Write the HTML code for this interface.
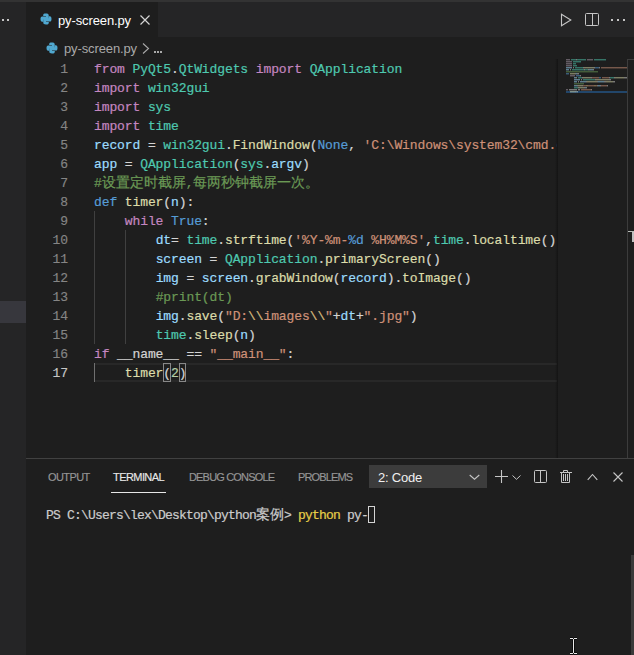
<!DOCTYPE html>
<html><head><meta charset="utf-8"><style>
*{margin:0;padding:0;box-sizing:border-box}
html,body{width:634px;height:655px;overflow:hidden;background:#1e1e1e}
body{position:relative;font-family:"Liberation Sans",sans-serif}
.a{position:absolute}
.ln{position:absolute;left:94px;height:19px;line-height:19px;white-space:pre;font-family:"Liberation Mono",monospace;font-size:13px;letter-spacing:-0.1px;color:#d4d4d4;-webkit-text-stroke:0.2px}
.num{position:absolute;left:26px;width:42px;text-align:right;height:19px;line-height:19px;font-family:"Liberation Mono",monospace;font-size:13px;letter-spacing:-0.1px;color:#858585;-webkit-text-stroke:0.15px}
.num.cur{color:#c6c6c6}
.ptab{position:absolute;top:460px;height:35px;line-height:35px;font-size:11px;color:#969696;white-space:nowrap;-webkit-text-stroke:0.15px}
svg{display:block}
.cjk{font-size:14px;letter-spacing:0}
</style></head><body>
<div class="a" style="left:0;top:0;width:634px;height:2px;background:#333"></div>
<div class="a" style="left:0;top:2px;width:26px;height:653px;background:#252526"></div>
<div class="a" style="left:0;top:301px;width:26px;height:22px;background:#37373d"></div>
<div class="a" style="left:2px;top:19px;width:2px;height:2px;background:#c5c5c5"></div>
<div class="a" style="left:7px;top:19px;width:2px;height:2px;background:#c5c5c5"></div>
<!-- tab bar -->
<div class="a" style="left:26px;top:2px;width:608px;height:35px;background:#252526"></div>
<div class="a" style="left:26px;top:2px;width:132px;height:35px;background:#1e1e1e"></div>
<svg class="a" style="left:40px;top:13px" width="12" height="12" viewBox="0 0 12 12"><g fill="#50a8d0"><path d="M3.2 2.2C3.2 .8 4.2 .5 6 .5C7.8 .5 8.7 1 8.7 2.2V5.2C8.7 5.8 8.2 6.3 7.6 6.3H4.6C3.9 6.3 3.4 6.8 3.4 7.5V8.7H2.2C1 8.7 .5 7.6 .5 6C.5 4.4 1 3.4 2.2 3.4H6V3H3.2Z"/><path d="M3.2 2.2C3.2 .8 4.2 .5 6 .5C7.8 .5 8.7 1 8.7 2.2V5.2C8.7 5.8 8.2 6.3 7.6 6.3H4.6C3.9 6.3 3.4 6.8 3.4 7.5V8.7H2.2C1 8.7 .5 7.6 .5 6C.5 4.4 1 3.4 2.2 3.4H6V3H3.2Z" transform="rotate(180 6 6)"/></g></svg>
<div class="a" style="left:58px;top:3px;height:35px;line-height:35px;font-size:13px;letter-spacing:-0.12px;color:#ffffff;white-space:nowrap">py-screen.py</div>
<svg class="a" style="left:140px;top:15px" width="10" height="10" viewBox="0 0 10 10"><path d="M.5 .5L9.5 9.5M9.5 .5L.5 9.5" stroke="#d4d4d4" stroke-width="1.2"/></svg>
<!-- editor actions -->
<svg class="a" style="left:560px;top:13px" width="12" height="14" viewBox="0 0 12 14"><path d="M1.5 1.3V12.7L10.8 7z" fill="none" stroke="#c5c5c5" stroke-width="1.1" stroke-linejoin="miter"/></svg>
<svg class="a" style="left:585px;top:13px" width="14" height="13" viewBox="0 0 14 13"><rect x=".5" y=".5" width="13" height="12" rx="1" fill="none" stroke="#c5c5c5"/><path d="M7.5 .5V12.5" stroke="#c5c5c5"/></svg>
<div class="a" style="left:611px;top:19px;width:2px;height:2px;background:#c5c5c5"></div>
<div class="a" style="left:617px;top:19px;width:2px;height:2px;background:#c5c5c5"></div>
<div class="a" style="left:623px;top:19px;width:2px;height:2px;background:#c5c5c5"></div>
<!-- breadcrumbs -->
<svg class="a" style="left:46px;top:42px" width="12" height="12" viewBox="0 0 12 12"><g fill="#50a8d0"><path d="M3.2 2.2C3.2 .8 4.2 .5 6 .5C7.8 .5 8.7 1 8.7 2.2V5.2C8.7 5.8 8.2 6.3 7.6 6.3H4.6C3.9 6.3 3.4 6.8 3.4 7.5V8.7H2.2C1 8.7 .5 7.6 .5 6C.5 4.4 1 3.4 2.2 3.4H6V3H3.2Z"/><path d="M3.2 2.2C3.2 .8 4.2 .5 6 .5C7.8 .5 8.7 1 8.7 2.2V5.2C8.7 5.8 8.2 6.3 7.6 6.3H4.6C3.9 6.3 3.4 6.8 3.4 7.5V8.7H2.2C1 8.7 .5 7.6 .5 6C.5 4.4 1 3.4 2.2 3.4H6V3H3.2Z" transform="rotate(180 6 6)"/></g></svg>
<div class="a" style="left:64px;top:38px;height:22px;line-height:22px;font-size:13px;letter-spacing:-0.12px;color:#a9a9a9;white-space:nowrap">py-screen.py</div>
<svg class="a" style="left:142px;top:43px" width="8" height="11" viewBox="0 0 8 11"><path d="M1 .5L6.5 5.5L1 10.5" fill="none" stroke="#a9a9a9" stroke-width="1.1"/></svg>
<div class="a" style="left:154px;top:51px;width:2px;height:2px;background:#a9a9a9"></div>
<div class="a" style="left:157px;top:51px;width:2px;height:2px;background:#a9a9a9"></div>
<div class="a" style="left:160px;top:51px;width:2px;height:2px;background:#a9a9a9"></div>
<!-- editor -->
<div class="a" style="left:94px;top:363px;width:463px;height:19px;border-top:2px solid #282828;border-bottom:2px solid #282828"></div>
<div class="a" style="left:94px;top:211px;width:1px;height:133px;background:#404040"></div><div class="a" style="left:125px;top:230px;width:1px;height:114px;background:#404040"></div><div class="a" style="left:94px;top:363px;width:1px;height:19px;background:#707070"></div>
<div class="a" style="left:163px;top:363px;width:8px;height:19px;border:1px solid #888"></div>
<div class="a" style="left:179px;top:363px;width:7px;height:19px;border:1px solid #888"></div>
<div class="num" style="top:60px">1</div><div class="num" style="top:79px">2</div><div class="num" style="top:98px">3</div><div class="num" style="top:117px">4</div><div class="num" style="top:136px">5</div><div class="num" style="top:155px">6</div><div class="num" style="top:174px">7</div><div class="num" style="top:193px">8</div><div class="num" style="top:212px">9</div><div class="num" style="top:231px">10</div><div class="num" style="top:250px">11</div><div class="num" style="top:269px">12</div><div class="num" style="top:288px">13</div><div class="num" style="top:307px">14</div><div class="num" style="top:326px">15</div><div class="num" style="top:345px">16</div><div class="num cur" style="top:364px">17</div>
<div class="a" style="left:0;top:0;width:557px;height:458px;overflow:hidden"><div class="ln" style="top:60px"><span style="color:#c586c0">from</span><span style="color:#d4d4d4"> </span><span style="color:#4ec9b0">PyQt5</span><span style="color:#d4d4d4">.</span><span style="color:#4ec9b0">QtWidgets</span><span style="color:#d4d4d4"> </span><span style="color:#c586c0">import</span><span style="color:#d4d4d4"> </span><span style="color:#4ec9b0">QApplication</span></div><div class="ln" style="top:79px"><span style="color:#c586c0">import</span><span style="color:#d4d4d4"> </span><span style="color:#4ec9b0">win32gui</span></div><div class="ln" style="top:98px"><span style="color:#c586c0">import</span><span style="color:#d4d4d4"> </span><span style="color:#4ec9b0">sys</span></div><div class="ln" style="top:117px"><span style="color:#c586c0">import</span><span style="color:#d4d4d4"> </span><span style="color:#4ec9b0">time</span></div><div class="ln" style="top:136px"><span style="color:#9cdcfe">record</span><span style="color:#d4d4d4"> = </span><span style="color:#4ec9b0">win32gui</span><span style="color:#d4d4d4">.</span><span style="color:#dcdcaa">FindWindow</span><span style="color:#d4d4d4">(</span><span style="color:#569cd6">None</span><span style="color:#d4d4d4">, </span><span style="color:#ce9178">'C:\Windows\system32\cmd.exe'</span><span style="color:#d4d4d4">)</span></div><div class="ln" style="top:155px"><span style="color:#9cdcfe">app</span><span style="color:#d4d4d4"> = </span><span style="color:#4ec9b0">QApplication</span><span style="color:#d4d4d4">(</span><span style="color:#4ec9b0">sys</span><span style="color:#d4d4d4">.</span><span style="color:#9cdcfe">argv</span><span style="color:#d4d4d4">)</span></div><div class="ln" style="top:174px"><span style="color:#6a9955">#</span><span style="color:#6a9955" class="cjk">设置定时截屏</span><span style="color:#6a9955">,</span><span style="color:#6a9955" class="cjk">每两秒钟截屏一次。</span></div><div class="ln" style="top:193px"><span style="color:#569cd6">def</span><span style="color:#d4d4d4"> </span><span style="color:#dcdcaa">timer</span><span style="color:#d4d4d4">(</span><span style="color:#9cdcfe">n</span><span style="color:#d4d4d4">):</span></div><div class="ln" style="top:212px"><span style="color:#d4d4d4">    </span><span style="color:#c586c0">while</span><span style="color:#d4d4d4"> </span><span style="color:#569cd6">True</span><span style="color:#d4d4d4">:</span></div><div class="ln" style="top:231px"><span style="color:#d4d4d4">        </span><span style="color:#9cdcfe">dt</span><span style="color:#d4d4d4">= </span><span style="color:#4ec9b0">time</span><span style="color:#d4d4d4">.</span><span style="color:#dcdcaa">strftime</span><span style="color:#d4d4d4">(</span><span style="color:#ce9178">'%Y-%m-</span><span style="color:#569cd6">%d</span><span style="color:#ce9178"> %H%M%S'</span><span style="color:#d4d4d4">,</span><span style="color:#4ec9b0">time</span><span style="color:#d4d4d4">.</span><span style="color:#dcdcaa">localtime</span><span style="color:#d4d4d4">())</span></div><div class="ln" style="top:250px"><span style="color:#d4d4d4">        </span><span style="color:#9cdcfe">screen</span><span style="color:#d4d4d4"> = </span><span style="color:#4ec9b0">QApplication</span><span style="color:#d4d4d4">.</span><span style="color:#dcdcaa">primaryScreen</span><span style="color:#d4d4d4">()</span></div><div class="ln" style="top:269px"><span style="color:#d4d4d4">        </span><span style="color:#9cdcfe">img</span><span style="color:#d4d4d4"> = </span><span style="color:#9cdcfe">screen</span><span style="color:#d4d4d4">.</span><span style="color:#dcdcaa">grabWindow</span><span style="color:#d4d4d4">(</span><span style="color:#9cdcfe">record</span><span style="color:#d4d4d4">).</span><span style="color:#dcdcaa">toImage</span><span style="color:#d4d4d4">()</span></div><div class="ln" style="top:288px"><span style="color:#d4d4d4">        </span><span style="color:#6a9955">#print(dt)</span></div><div class="ln" style="top:307px"><span style="color:#d4d4d4">        </span><span style="color:#9cdcfe">img</span><span style="color:#d4d4d4">.</span><span style="color:#dcdcaa">save</span><span style="color:#d4d4d4">(</span><span style="color:#ce9178">"D:</span><span style="color:#d7ba7d">\\</span><span style="color:#ce9178">images</span><span style="color:#d7ba7d">\\</span><span style="color:#ce9178">"</span><span style="color:#d4d4d4">+</span><span style="color:#9cdcfe">dt</span><span style="color:#d4d4d4">+</span><span style="color:#ce9178">".jpg"</span><span style="color:#d4d4d4">)</span></div><div class="ln" style="top:326px"><span style="color:#d4d4d4">        </span><span style="color:#4ec9b0">time</span><span style="color:#d4d4d4">.</span><span style="color:#dcdcaa">sleep</span><span style="color:#d4d4d4">(</span><span style="color:#9cdcfe">n</span><span style="color:#d4d4d4">)</span></div><div class="ln" style="top:345px"><span style="color:#c586c0">if</span><span style="color:#d4d4d4"> </span><span style="color:#d4d4d4">__name__</span><span style="color:#d4d4d4"> == </span><span style="color:#ce9178">"__main__"</span><span style="color:#d4d4d4">:</span></div><div class="ln" style="top:364px"><span style="color:#d4d4d4">    </span><span style="color:#dcdcaa">timer</span><span style="color:#d4d4d4">(</span><span style="color:#b5cea8">2</span><span style="color:#d4d4d4">)</span></div></div>
<div class="a" style="left:555px;top:59px;width:3px;height:399px;background:linear-gradient(to right,rgba(0,0,0,0),rgba(0,0,0,.35))"></div>
<div class="a" style="left:566px;top:91px;width:61px;height:2px;background:#22466a"></div>
<div class="a" style="left:566px;top:59px;width:4px;height:2px;background:linear-gradient(rgba(168,152,168,0.5) 50%,rgba(168,152,168,0.22) 50%)"></div><div class="a" style="left:571px;top:59px;width:5px;height:2px;background:linear-gradient(rgba(78,201,176,0.5) 50%,rgba(78,201,176,0.22) 50%)"></div><div class="a" style="left:576px;top:59px;width:1px;height:2px;background:linear-gradient(rgba(212,212,212,0.5) 50%,rgba(212,212,212,0.22) 50%)"></div><div class="a" style="left:577px;top:59px;width:9px;height:2px;background:linear-gradient(rgba(78,201,176,0.5) 50%,rgba(78,201,176,0.22) 50%)"></div><div class="a" style="left:587px;top:59px;width:6px;height:2px;background:linear-gradient(rgba(168,152,168,0.5) 50%,rgba(168,152,168,0.22) 50%)"></div><div class="a" style="left:594px;top:59px;width:12px;height:2px;background:linear-gradient(rgba(78,201,176,0.5) 50%,rgba(78,201,176,0.22) 50%)"></div><div class="a" style="left:566px;top:61px;width:6px;height:2px;background:linear-gradient(rgba(168,152,168,0.5) 50%,rgba(168,152,168,0.22) 50%)"></div><div class="a" style="left:573px;top:61px;width:8px;height:2px;background:linear-gradient(rgba(78,201,176,0.5) 50%,rgba(78,201,176,0.22) 50%)"></div><div class="a" style="left:566px;top:63px;width:6px;height:2px;background:linear-gradient(rgba(168,152,168,0.5) 50%,rgba(168,152,168,0.22) 50%)"></div><div class="a" style="left:573px;top:63px;width:3px;height:2px;background:linear-gradient(rgba(78,201,176,0.5) 50%,rgba(78,201,176,0.22) 50%)"></div><div class="a" style="left:566px;top:65px;width:6px;height:2px;background:linear-gradient(rgba(168,152,168,0.5) 50%,rgba(168,152,168,0.22) 50%)"></div><div class="a" style="left:573px;top:65px;width:4px;height:2px;background:linear-gradient(rgba(78,201,176,0.5) 50%,rgba(78,201,176,0.22) 50%)"></div><div class="a" style="left:566px;top:67px;width:6px;height:2px;background:linear-gradient(rgba(156,220,254,0.5) 50%,rgba(156,220,254,0.22) 50%)"></div><div class="a" style="left:573px;top:67px;width:1px;height:2px;background:linear-gradient(rgba(212,212,212,0.5) 50%,rgba(212,212,212,0.22) 50%)"></div><div class="a" style="left:575px;top:67px;width:8px;height:2px;background:linear-gradient(rgba(78,201,176,0.5) 50%,rgba(78,201,176,0.22) 50%)"></div><div class="a" style="left:583px;top:67px;width:1px;height:2px;background:linear-gradient(rgba(212,212,212,0.5) 50%,rgba(212,212,212,0.22) 50%)"></div><div class="a" style="left:584px;top:67px;width:10px;height:2px;background:linear-gradient(rgba(220,220,170,0.5) 50%,rgba(220,220,170,0.22) 50%)"></div><div class="a" style="left:594px;top:67px;width:1px;height:2px;background:linear-gradient(rgba(212,212,212,0.5) 50%,rgba(212,212,212,0.22) 50%)"></div><div class="a" style="left:595px;top:67px;width:4px;height:2px;background:linear-gradient(rgba(86,156,214,0.5) 50%,rgba(86,156,214,0.22) 50%)"></div><div class="a" style="left:599px;top:67px;width:1px;height:2px;background:linear-gradient(rgba(212,212,212,0.5) 50%,rgba(212,212,212,0.22) 50%)"></div><div class="a" style="left:601px;top:67px;width:26px;height:2px;background:linear-gradient(rgba(206,145,120,0.5) 50%,rgba(206,145,120,0.22) 50%)"></div><div class="a" style="left:566px;top:69px;width:3px;height:2px;background:linear-gradient(rgba(156,220,254,0.5) 50%,rgba(156,220,254,0.22) 50%)"></div><div class="a" style="left:570px;top:69px;width:1px;height:2px;background:linear-gradient(rgba(212,212,212,0.5) 50%,rgba(212,212,212,0.22) 50%)"></div><div class="a" style="left:572px;top:69px;width:12px;height:2px;background:linear-gradient(rgba(78,201,176,0.5) 50%,rgba(78,201,176,0.22) 50%)"></div><div class="a" style="left:584px;top:69px;width:1px;height:2px;background:linear-gradient(rgba(212,212,212,0.5) 50%,rgba(212,212,212,0.22) 50%)"></div><div class="a" style="left:585px;top:69px;width:3px;height:2px;background:linear-gradient(rgba(78,201,176,0.5) 50%,rgba(78,201,176,0.22) 50%)"></div><div class="a" style="left:588px;top:69px;width:1px;height:2px;background:linear-gradient(rgba(212,212,212,0.5) 50%,rgba(212,212,212,0.22) 50%)"></div><div class="a" style="left:589px;top:69px;width:4px;height:2px;background:linear-gradient(rgba(156,220,254,0.5) 50%,rgba(156,220,254,0.22) 50%)"></div><div class="a" style="left:593px;top:69px;width:1px;height:2px;background:linear-gradient(rgba(212,212,212,0.5) 50%,rgba(212,212,212,0.22) 50%)"></div><div class="a" style="left:566px;top:71px;width:1px;height:2px;background:linear-gradient(rgba(106,153,85,0.5) 50%,rgba(106,153,85,0.22) 50%)"></div><div class="a" style="left:567px;top:71px;width:12px;height:2px;background:linear-gradient(rgba(106,153,85,0.5) 50%,rgba(106,153,85,0.22) 50%)"></div><div class="a" style="left:579px;top:71px;width:1px;height:2px;background:linear-gradient(rgba(106,153,85,0.5) 50%,rgba(106,153,85,0.22) 50%)"></div><div class="a" style="left:580px;top:71px;width:18px;height:2px;background:linear-gradient(rgba(106,153,85,0.5) 50%,rgba(106,153,85,0.22) 50%)"></div><div class="a" style="left:566px;top:73px;width:3px;height:2px;background:linear-gradient(rgba(86,156,214,0.5) 50%,rgba(86,156,214,0.22) 50%)"></div><div class="a" style="left:570px;top:73px;width:5px;height:2px;background:linear-gradient(rgba(220,220,170,0.5) 50%,rgba(220,220,170,0.22) 50%)"></div><div class="a" style="left:575px;top:73px;width:1px;height:2px;background:linear-gradient(rgba(212,212,212,0.5) 50%,rgba(212,212,212,0.22) 50%)"></div><div class="a" style="left:576px;top:73px;width:1px;height:2px;background:linear-gradient(rgba(156,220,254,0.5) 50%,rgba(156,220,254,0.22) 50%)"></div><div class="a" style="left:577px;top:73px;width:2px;height:2px;background:linear-gradient(rgba(212,212,212,0.5) 50%,rgba(212,212,212,0.22) 50%)"></div><div class="a" style="left:570px;top:75px;width:5px;height:2px;background:linear-gradient(rgba(168,152,168,0.5) 50%,rgba(168,152,168,0.22) 50%)"></div><div class="a" style="left:576px;top:75px;width:4px;height:2px;background:linear-gradient(rgba(86,156,214,0.5) 50%,rgba(86,156,214,0.22) 50%)"></div><div class="a" style="left:580px;top:75px;width:1px;height:2px;background:linear-gradient(rgba(212,212,212,0.5) 50%,rgba(212,212,212,0.22) 50%)"></div><div class="a" style="left:574px;top:77px;width:2px;height:2px;background:linear-gradient(rgba(156,220,254,0.5) 50%,rgba(156,220,254,0.22) 50%)"></div><div class="a" style="left:576px;top:77px;width:1px;height:2px;background:linear-gradient(rgba(212,212,212,0.5) 50%,rgba(212,212,212,0.22) 50%)"></div><div class="a" style="left:578px;top:77px;width:4px;height:2px;background:linear-gradient(rgba(78,201,176,0.5) 50%,rgba(78,201,176,0.22) 50%)"></div><div class="a" style="left:582px;top:77px;width:1px;height:2px;background:linear-gradient(rgba(212,212,212,0.5) 50%,rgba(212,212,212,0.22) 50%)"></div><div class="a" style="left:583px;top:77px;width:8px;height:2px;background:linear-gradient(rgba(220,220,170,0.5) 50%,rgba(220,220,170,0.22) 50%)"></div><div class="a" style="left:591px;top:77px;width:1px;height:2px;background:linear-gradient(rgba(212,212,212,0.5) 50%,rgba(212,212,212,0.22) 50%)"></div><div class="a" style="left:592px;top:77px;width:7px;height:2px;background:linear-gradient(rgba(206,145,120,0.5) 50%,rgba(206,145,120,0.22) 50%)"></div><div class="a" style="left:599px;top:77px;width:2px;height:2px;background:linear-gradient(rgba(86,156,214,0.5) 50%,rgba(86,156,214,0.22) 50%)"></div><div class="a" style="left:602px;top:77px;width:7px;height:2px;background:linear-gradient(rgba(206,145,120,0.5) 50%,rgba(206,145,120,0.22) 50%)"></div><div class="a" style="left:609px;top:77px;width:1px;height:2px;background:linear-gradient(rgba(212,212,212,0.5) 50%,rgba(212,212,212,0.22) 50%)"></div><div class="a" style="left:610px;top:77px;width:4px;height:2px;background:linear-gradient(rgba(78,201,176,0.5) 50%,rgba(78,201,176,0.22) 50%)"></div><div class="a" style="left:614px;top:77px;width:1px;height:2px;background:linear-gradient(rgba(212,212,212,0.5) 50%,rgba(212,212,212,0.22) 50%)"></div><div class="a" style="left:615px;top:77px;width:9px;height:2px;background:linear-gradient(rgba(220,220,170,0.5) 50%,rgba(220,220,170,0.22) 50%)"></div><div class="a" style="left:624px;top:77px;width:3px;height:2px;background:linear-gradient(rgba(212,212,212,0.5) 50%,rgba(212,212,212,0.22) 50%)"></div><div class="a" style="left:574px;top:79px;width:6px;height:2px;background:linear-gradient(rgba(156,220,254,0.5) 50%,rgba(156,220,254,0.22) 50%)"></div><div class="a" style="left:581px;top:79px;width:1px;height:2px;background:linear-gradient(rgba(212,212,212,0.5) 50%,rgba(212,212,212,0.22) 50%)"></div><div class="a" style="left:583px;top:79px;width:12px;height:2px;background:linear-gradient(rgba(78,201,176,0.5) 50%,rgba(78,201,176,0.22) 50%)"></div><div class="a" style="left:595px;top:79px;width:1px;height:2px;background:linear-gradient(rgba(212,212,212,0.5) 50%,rgba(212,212,212,0.22) 50%)"></div><div class="a" style="left:596px;top:79px;width:13px;height:2px;background:linear-gradient(rgba(220,220,170,0.5) 50%,rgba(220,220,170,0.22) 50%)"></div><div class="a" style="left:609px;top:79px;width:2px;height:2px;background:linear-gradient(rgba(212,212,212,0.5) 50%,rgba(212,212,212,0.22) 50%)"></div><div class="a" style="left:574px;top:81px;width:3px;height:2px;background:linear-gradient(rgba(156,220,254,0.5) 50%,rgba(156,220,254,0.22) 50%)"></div><div class="a" style="left:578px;top:81px;width:1px;height:2px;background:linear-gradient(rgba(212,212,212,0.5) 50%,rgba(212,212,212,0.22) 50%)"></div><div class="a" style="left:580px;top:81px;width:6px;height:2px;background:linear-gradient(rgba(156,220,254,0.5) 50%,rgba(156,220,254,0.22) 50%)"></div><div class="a" style="left:586px;top:81px;width:1px;height:2px;background:linear-gradient(rgba(212,212,212,0.5) 50%,rgba(212,212,212,0.22) 50%)"></div><div class="a" style="left:587px;top:81px;width:10px;height:2px;background:linear-gradient(rgba(220,220,170,0.5) 50%,rgba(220,220,170,0.22) 50%)"></div><div class="a" style="left:597px;top:81px;width:1px;height:2px;background:linear-gradient(rgba(212,212,212,0.5) 50%,rgba(212,212,212,0.22) 50%)"></div><div class="a" style="left:598px;top:81px;width:6px;height:2px;background:linear-gradient(rgba(156,220,254,0.5) 50%,rgba(156,220,254,0.22) 50%)"></div><div class="a" style="left:604px;top:81px;width:2px;height:2px;background:linear-gradient(rgba(212,212,212,0.5) 50%,rgba(212,212,212,0.22) 50%)"></div><div class="a" style="left:606px;top:81px;width:7px;height:2px;background:linear-gradient(rgba(220,220,170,0.5) 50%,rgba(220,220,170,0.22) 50%)"></div><div class="a" style="left:613px;top:81px;width:2px;height:2px;background:linear-gradient(rgba(212,212,212,0.5) 50%,rgba(212,212,212,0.22) 50%)"></div><div class="a" style="left:574px;top:83px;width:10px;height:2px;background:linear-gradient(rgba(106,153,85,0.5) 50%,rgba(106,153,85,0.22) 50%)"></div><div class="a" style="left:574px;top:85px;width:3px;height:2px;background:linear-gradient(rgba(156,220,254,0.5) 50%,rgba(156,220,254,0.22) 50%)"></div><div class="a" style="left:577px;top:85px;width:1px;height:2px;background:linear-gradient(rgba(212,212,212,0.5) 50%,rgba(212,212,212,0.22) 50%)"></div><div class="a" style="left:578px;top:85px;width:4px;height:2px;background:linear-gradient(rgba(220,220,170,0.5) 50%,rgba(220,220,170,0.22) 50%)"></div><div class="a" style="left:582px;top:85px;width:1px;height:2px;background:linear-gradient(rgba(212,212,212,0.5) 50%,rgba(212,212,212,0.22) 50%)"></div><div class="a" style="left:583px;top:85px;width:3px;height:2px;background:linear-gradient(rgba(206,145,120,0.5) 50%,rgba(206,145,120,0.22) 50%)"></div><div class="a" style="left:586px;top:85px;width:2px;height:2px;background:linear-gradient(rgba(215,186,125,0.5) 50%,rgba(215,186,125,0.22) 50%)"></div><div class="a" style="left:588px;top:85px;width:6px;height:2px;background:linear-gradient(rgba(206,145,120,0.5) 50%,rgba(206,145,120,0.22) 50%)"></div><div class="a" style="left:594px;top:85px;width:2px;height:2px;background:linear-gradient(rgba(215,186,125,0.5) 50%,rgba(215,186,125,0.22) 50%)"></div><div class="a" style="left:596px;top:85px;width:1px;height:2px;background:linear-gradient(rgba(206,145,120,0.5) 50%,rgba(206,145,120,0.22) 50%)"></div><div class="a" style="left:597px;top:85px;width:1px;height:2px;background:linear-gradient(rgba(212,212,212,0.5) 50%,rgba(212,212,212,0.22) 50%)"></div><div class="a" style="left:598px;top:85px;width:2px;height:2px;background:linear-gradient(rgba(156,220,254,0.5) 50%,rgba(156,220,254,0.22) 50%)"></div><div class="a" style="left:600px;top:85px;width:1px;height:2px;background:linear-gradient(rgba(212,212,212,0.5) 50%,rgba(212,212,212,0.22) 50%)"></div><div class="a" style="left:601px;top:85px;width:6px;height:2px;background:linear-gradient(rgba(206,145,120,0.5) 50%,rgba(206,145,120,0.22) 50%)"></div><div class="a" style="left:607px;top:85px;width:1px;height:2px;background:linear-gradient(rgba(212,212,212,0.5) 50%,rgba(212,212,212,0.22) 50%)"></div><div class="a" style="left:574px;top:87px;width:4px;height:2px;background:linear-gradient(rgba(78,201,176,0.5) 50%,rgba(78,201,176,0.22) 50%)"></div><div class="a" style="left:578px;top:87px;width:1px;height:2px;background:linear-gradient(rgba(212,212,212,0.5) 50%,rgba(212,212,212,0.22) 50%)"></div><div class="a" style="left:579px;top:87px;width:5px;height:2px;background:linear-gradient(rgba(220,220,170,0.5) 50%,rgba(220,220,170,0.22) 50%)"></div><div class="a" style="left:584px;top:87px;width:1px;height:2px;background:linear-gradient(rgba(212,212,212,0.5) 50%,rgba(212,212,212,0.22) 50%)"></div><div class="a" style="left:585px;top:87px;width:1px;height:2px;background:linear-gradient(rgba(156,220,254,0.5) 50%,rgba(156,220,254,0.22) 50%)"></div><div class="a" style="left:586px;top:87px;width:1px;height:2px;background:linear-gradient(rgba(212,212,212,0.5) 50%,rgba(212,212,212,0.22) 50%)"></div><div class="a" style="left:566px;top:89px;width:2px;height:2px;background:linear-gradient(rgba(168,152,168,0.5) 50%,rgba(168,152,168,0.22) 50%)"></div><div class="a" style="left:569px;top:89px;width:8px;height:2px;background:linear-gradient(rgba(212,212,212,0.5) 50%,rgba(212,212,212,0.22) 50%)"></div><div class="a" style="left:578px;top:89px;width:2px;height:2px;background:linear-gradient(rgba(212,212,212,0.5) 50%,rgba(212,212,212,0.22) 50%)"></div><div class="a" style="left:581px;top:89px;width:10px;height:2px;background:linear-gradient(rgba(206,145,120,0.5) 50%,rgba(206,145,120,0.22) 50%)"></div><div class="a" style="left:591px;top:89px;width:1px;height:2px;background:linear-gradient(rgba(212,212,212,0.5) 50%,rgba(212,212,212,0.22) 50%)"></div><div class="a" style="left:570px;top:91px;width:5px;height:2px;background:linear-gradient(rgba(220,220,170,0.5) 50%,rgba(220,220,170,0.22) 50%)"></div><div class="a" style="left:575px;top:91px;width:1px;height:2px;background:linear-gradient(rgba(212,212,212,0.5) 50%,rgba(212,212,212,0.22) 50%)"></div><div class="a" style="left:576px;top:91px;width:1px;height:2px;background:linear-gradient(rgba(181,206,168,0.5) 50%,rgba(181,206,168,0.22) 50%)"></div><div class="a" style="left:577px;top:91px;width:1px;height:2px;background:linear-gradient(rgba(212,212,212,0.5) 50%,rgba(212,212,212,0.22) 50%)"></div>
<div class="a" style="left:627px;top:59px;width:1px;height:399px;background:#3c3c3c"></div>
<div class="a" style="left:627px;top:59px;width:7px;height:1px;background:#3c3c3c"></div>
<div class="a" style="left:628px;top:231px;width:6px;height:1px;background:#b8bcb8"></div>
<div class="a" style="left:632px;top:232px;width:2px;height:10px;background:#c0c0c0"></div>
<!-- panel -->
<div class="a" style="left:26px;top:458px;width:608px;height:1px;background:#414141"></div>
<div class="ptab" style="left:48px;letter-spacing:-0.6px">OUTPUT</div>
<div class="ptab" style="left:113px;color:#e7e7e7;letter-spacing:-0.57px">TERMINAL</div>
<div class="a" style="left:111px;top:492px;width:55px;height:1px;background:#e7e7e7"></div>
<div class="ptab" style="left:189px;letter-spacing:-0.83px">DEBUG CONSOLE</div>
<div class="ptab" style="left:298px;letter-spacing:-0.86px">PROBLEMS</div>
<div class="a" style="left:369px;top:465px;width:118px;height:23px;background:#3c3c3c"></div>
<div class="a" style="left:378px;top:466px;height:23px;line-height:23px;font-size:13px;letter-spacing:-0.2px;color:#f0f0f0;white-space:nowrap">2: Code</div>
<svg class="a" style="left:469px;top:474px" width="11" height="7" viewBox="0 0 11 7"><path d="M.7 1L5.5 5.2L10.3 1" fill="none" stroke="#c5c5c5" stroke-width="1.1"/></svg>
<svg class="a" style="left:495px;top:470px" width="13" height="13" viewBox="0 0 13 13"><path d="M6.5 0V13M0 6.5H13" stroke="#c5c5c5" stroke-width="1.1"/></svg>
<svg class="a" style="left:512px;top:475px" width="9" height="5" viewBox="0 0 9 5"><path d="M.5 .5L4.5 4.3L8.5 .5" fill="none" stroke="#c5c5c5" stroke-width="1"/></svg>
<svg class="a" style="left:534px;top:470px" width="13" height="13" viewBox="0 0 13 13"><rect x=".5" y=".5" width="12" height="12" rx="1" fill="none" stroke="#c5c5c5"/><path d="M6.5 .5V12.5" stroke="#c5c5c5"/></svg>
<svg class="a" style="left:559px;top:469px" width="14" height="15" viewBox="0 0 14 15"><path d="M4.5 3V1.5H8.5V3M1 3.5H13M2.5 3.5V13.5H10.5V3.5M4.5 5V12M6.5 5V12M8.5 5V12" fill="none" stroke="#c5c5c5" stroke-width="1"/></svg>
<svg class="a" style="left:587px;top:473px" width="11" height="8" viewBox="0 0 11 8"><path d="M.7 6.8L5.5 1.5L10.3 6.8" fill="none" stroke="#c5c5c5" stroke-width="1.1"/></svg>
<svg class="a" style="left:613px;top:472px" width="10" height="10" viewBox="0 0 10 10"><path d="M.5 .5L9.5 9.5M9.5 .5L.5 9.5" stroke="#c5c5c5" stroke-width="1.1"/></svg>
<div class="a" style="left:46px;top:507px;height:17px;line-height:17px;white-space:pre;font-family:'Liberation Mono',monospace;font-size:13px;letter-spacing:-0.8px;color:#cccccc;-webkit-text-stroke:0.2px">PS C:\Users\lex\Desktop\python<span class="cjk">案例</span>&gt; <span style="color:#e6cf48">python</span> py-</div>
<div class="a" style="left:368px;top:506px;width:7px;height:17px;border:1px solid #d4d4d4"></div>
<div class="a" style="left:631px;top:555px;width:3px;height:100px;background:#3a3a3a"></div>
<!-- I-beam -->
<svg class="a" style="left:568px;top:636px" width="11" height="19" viewBox="0 0 11 19"><path d="M2 2.5h3M6 2.5h3M5.5 3V17M2 17.5h3M6 17.5h3" stroke="#000" stroke-width="3" opacity=".6"/><path d="M2 2.5h3M6 2.5h3M5.5 3V17M2 17.5h3M6 17.5h3" stroke="#e8e8e8" stroke-width="1"/></svg>
</body></html>
